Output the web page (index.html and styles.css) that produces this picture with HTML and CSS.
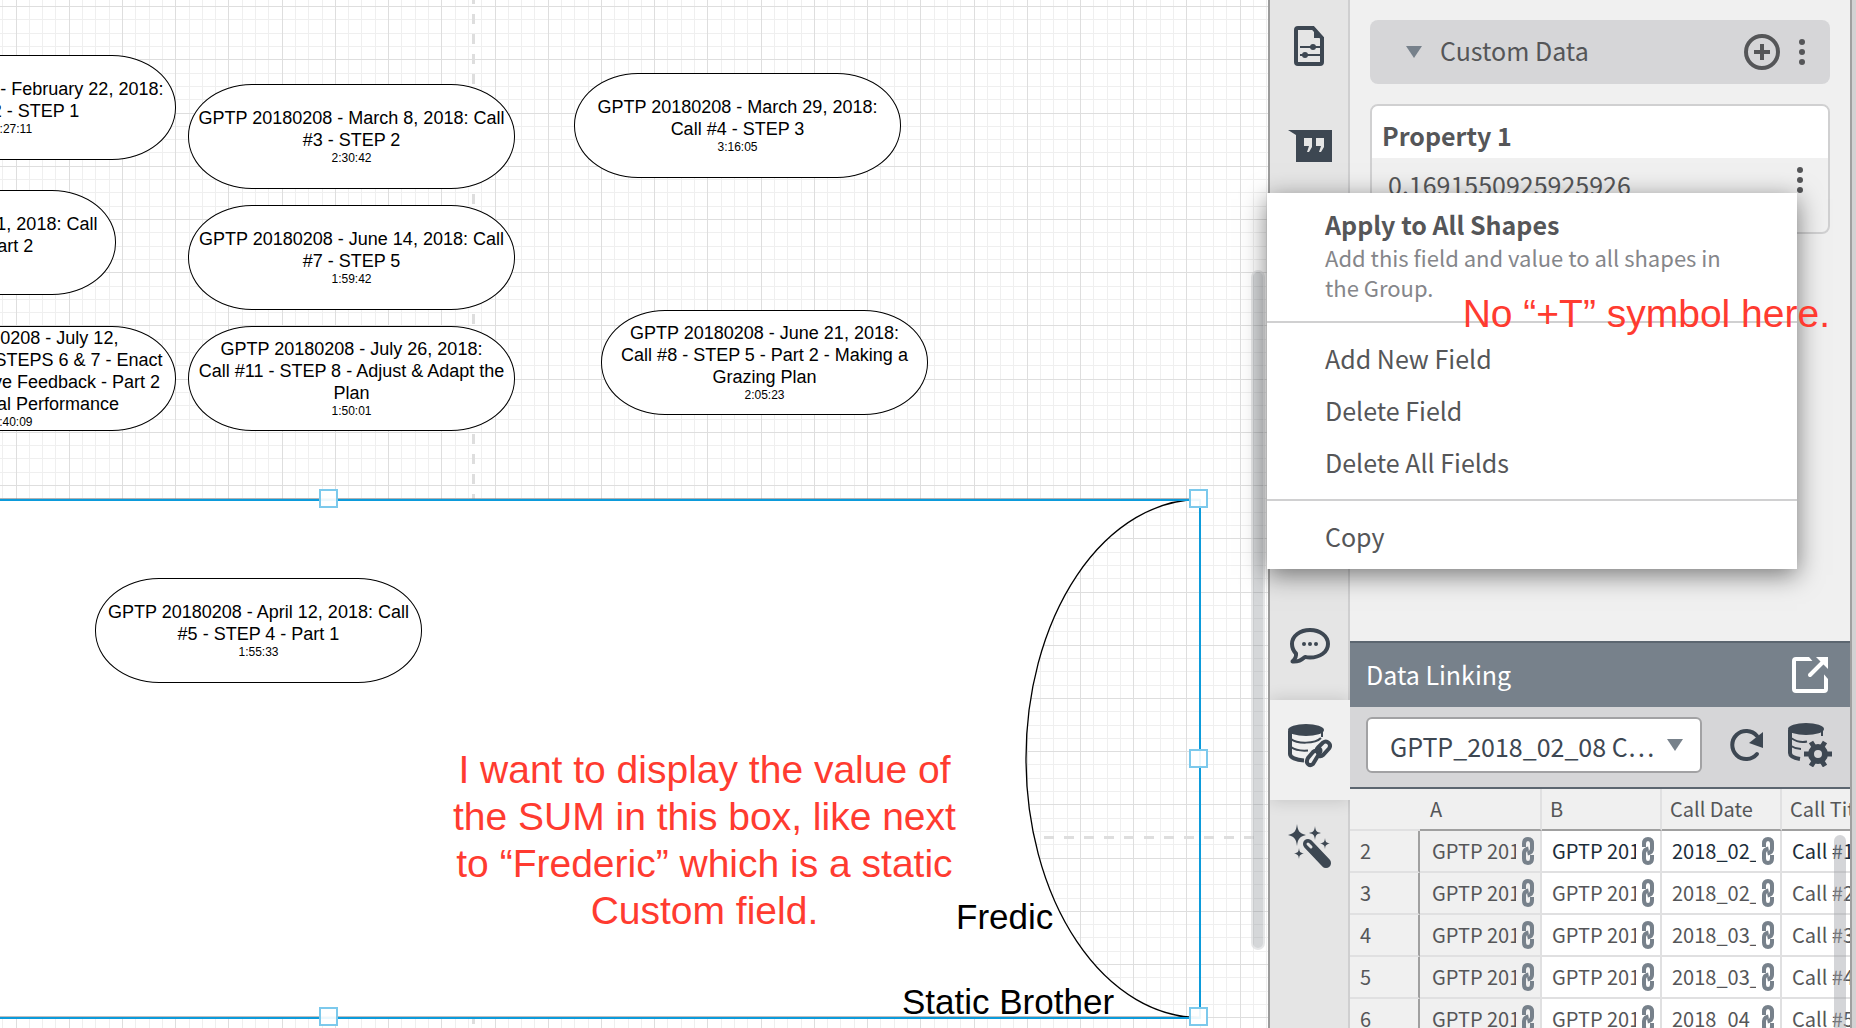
FILE: index.html
```html
<!DOCTYPE html>
<html lang="en">
<head>
<meta charset="utf-8">
<title>Diagram editor</title>
<link rel="stylesheet" href="styles.css">
</head>
<body>
<svg class="defs" aria-hidden="true">
  <symbol id="dots" viewBox="0 0 8 28"><circle cx="4" cy="4" r="3"/><circle cx="4" cy="14" r="3"/><circle cx="4" cy="24" r="3"/></symbol>
  <symbol id="link" viewBox="0 0 14 30"><path d="M3 11V7.500Q3 3 7 3T11 7.500V13Q11 16.500 6.500 17.500M11 19V22.500Q11 27 7 27T3 22.500V17Q3 13.500 7.500 12.500" fill="none" stroke="currentColor" stroke-width="4"/></symbol>
</svg>
<div class="app">
  <main class="canvas">
    <svg class="grid" aria-hidden="true">
      <g shape-rendering="crispEdges">
        <path class="minor" stroke-dasharray="1 12.305" d="M-37.670 1500H4000"/>
        <path class="minor" stroke-dasharray="1 12.305" d="M2000 -47.120V3000"/>
        <path class="major" stroke-dasharray="1 52.220" d="M-37.670 1500H4000"/>
        <path class="major" stroke-dasharray="1 52.220" d="M2000 -47.120V3000"/>
      </g>
      <path class="page-edge" d="M473.500 -6V3000M-16 837.500H1256"/>
      <path class="body-shape" d="M-10 499.500H1200A174 259 0 0 0 1200 1017.500H-10Z"/>
    </svg>

    <div class="node n1"><p>GPTP 20180208 - February 22, 2018:<br>Call #2 - STEP 1</p><small>1:27:11</small></div>
    <div class="node n2"><p>GPTP 20180208 - May 1, 2018: Call<br>#6 - STEP 4 - Part 2</p><small>2:04:10</small></div>
    <div class="node n3"><p>GPTP 20180208 - July 12,<br>2018: Call #10 - STEPS 6 &amp; 7 - Enact<br>&amp; the Constructive Feedback - Part 2<br>- Educational Performance</p><small>1:40:09</small></div>
    <div class="node n4"><p>GPTP 20180208 - March 8, 2018: Call<br>#3 - STEP 2</p><small>2:30:42</small></div>
    <div class="node n5"><p>GPTP 20180208 - June 14, 2018: Call<br>#7 - STEP 5</p><small>1:59:42</small></div>
    <div class="node n6"><p>GPTP 20180208 - July 26, 2018:<br>Call #11 - STEP 8 - Adjust &amp; Adapt the<br>Plan</p><small>1:50:01</small></div>
    <div class="node n7"><p>GPTP 20180208 - March 29, 2018:<br>Call #4 - STEP 3</p><small>3:16:05</small></div>
    <div class="node n8"><p>GPTP 20180208 - June 21, 2018:<br>Call #8 - STEP 5 - Part 2 - Making a<br>Grazing Plan</p><small>2:05:23</small></div>
    <div class="node n9"><p>GPTP 20180208 - April 12, 2018: Call<br>#5 - STEP 4 - Part 1</p><small>1:55:33</small></div>

    <p class="shape-text fredic">Fredic</p>
    <p class="shape-text brother">Static Brother</p>

    <div class="selection">
      <i class="handle tm"></i><i class="handle tr"></i><i class="handle mr"></i><i class="handle br"></i><i class="handle bm"></i>
    </div>

    <p class="note note-sum">I want to display the value of<br>the SUM in this box, like next<br>to “Frederic” which is a static<br>Custom field.</p>
    <div class="canvas-scroll"></div>
  </main>

  <aside class="sidebar">
    <nav class="rail">
      <button class="tab" aria-label="Page settings"><svg width="44" height="44" viewBox="0 0 44 44"><path d="M10 4h15l9 10v24a2 2 0 0 1-2 2H10a2 2 0 0 1-2-2V6a2 2 0 0 1 2-2Z" fill="none" stroke="currentColor" stroke-width="4"/><path d="M26 3l9 11h-9Z" fill="currentColor"/><path d="M12 23h20M12 31h20" stroke="currentColor" stroke-width="2"/><circle cx="25" cy="23" r="3" fill="currentColor"/><circle cx="17" cy="31" r="3" fill="currentColor"/></svg></button>
      <button class="tab" aria-label="Notes"><svg width="44" height="44" viewBox="0 0 44 44"><path d="M0 6h44v32H8V11Z" fill="currentColor"/><path d="M16 14h8v9l-3 5h-2l2-6h-5ZM28 14h8v9l-3 5h-2l2-6h-5Z" fill="#e5e5e5"/></svg></button>
      <div class="rail-gap"></div>
      <button class="tab" aria-label="Comments"><svg width="44" height="44" viewBox="0 0 44 44"><path d="M22 6c10 0 18 6 18 14s-8 13.500-18 13.500c-2 0-3.500-.2-5-.6C14 35.500 9 38 4.500 37.500 7 35 8.500 32 8 29.500 5.500 27 4 24 4 20 4 12 12 6 22 6Z" fill="none" stroke="currentColor" stroke-width="4" stroke-linejoin="round"/><g fill="currentColor"><circle cx="16" cy="20" r="2"/><circle cx="22" cy="20" r="2"/><circle cx="28" cy="20" r="2"/></g></svg></button>
      <button class="tab active" aria-label="Data linking"><svg width="44" height="44" viewBox="0 0 44 44"><ellipse cx="18" cy="6" rx="18" ry="6" fill="currentColor"/><path d="M2 7v23c0 3.500 6 6 14 6.500" fill="none" stroke="currentColor" stroke-width="4"/><path d="M34 7v6M3 15c6 5 24 5 30-1M3 23c4 3 11 4 17 3.500" fill="none" stroke="currentColor" stroke-width="2"/><g fill="none" stroke="currentColor" stroke-width="4"><path d="M31 28l-1 1c-2-2-2-3.500 0-5.500l5-5c4-3 9 2 6 6l-6 6.500c-1 1-2.500 1.500-4 1"/><path d="M31 24c2 2 2 4 0 6l-6 10c-4 3-8-1-5-6l5-6c1-1 2.500-1.500 4-1"/></g></svg></button>
      <button class="tab" aria-label="Magic"><svg width="44" height="44" viewBox="0 0 44 44"><g fill="currentColor"><path d="M9 0c1 7 2 9 9 11-7 2-8 4-9 11-1-7-2-9-9-11 7-2 8-4 9-11ZM27 2c.6 5 1.500 6 6 7-4.500 1-5.400 2-6 7-.6-5-1.500-6-6-7 4.500-1 5.400-2 6-7ZM37 14c.5 4 1 4.500 5 5.500-4 1-4.500 1.500-5 5.500-.5-4-1-4.500-5-5.500 4-1 4.500-1.500 5-5.500ZM11 24c.5 4 1 4.500 5 5.500-4 1-4.500 1.500-5 5.500-.5-4-1-4.500-5-5.500 4-1 4.500-1.500 5-5.500Z"/></g><path d="M20 20l18 19" stroke="currentColor" stroke-width="10" stroke-linecap="round"/><path d="M20 20l3 3" stroke="#e5e5e5" stroke-width="3" stroke-linecap="round"/></svg></button>
    </nav>

    <div class="panel">
      <section class="custom">
        <header class="custom-head">
          <i class="tri"></i><h2>Custom Data</h2>
          <button class="icon-btn add" aria-label="Add field"><svg width="36" height="36" viewBox="0 0 36 36"><circle cx="18" cy="18" r="16" fill="none" stroke="currentColor" stroke-width="4"/><path d="M18 10v16M10 18h16" stroke="currentColor" stroke-width="4"/></svg></button>
          <button class="icon-btn" aria-label="More"><svg class="dots" width="8" height="28"><use href="#dots"/></svg></button>
        </header>
        <div class="card">
          <h3>Property 1</h3>
          <div class="card-value"><span>0.1691550925925926</span><button class="icon-btn" aria-label="Field options"><svg class="dots" width="8" height="28"><use href="#dots"/></svg></button></div>
        </div>
      </section>

      <section class="linking">
        <header class="link-head"><h2>Data Linking</h2><button class="icon-btn" aria-label="Open in window"><svg width="36" height="36" viewBox="0 0 36 36"><path d="M21 2H4a2 2 0 0 0-2 2v28a2 2 0 0 0 2 2h28a2 2 0 0 0 2-2V15" fill="none" stroke="currentColor" stroke-width="4"/><path d="M17 0h19v22Z" fill="#77818b"/><path d="M24 0h12v12Z" fill="currentColor"/><path d="M18 18L31 5" stroke="currentColor" stroke-width="4" stroke-linecap="round"/></svg></button></header>
        <div class="link-tools">
          <div class="picker"><select aria-label="Data set"><option>GPTP_2018_02_08 C…</option></select><i class="tri"></i></div>
          <button class="icon-btn refresh" aria-label="Refresh"><svg width="36" height="36" viewBox="0 0 36 36"><path d="M29 27A14 14 0 1 1 29 9" fill="none" stroke="currentColor" stroke-width="4" stroke-linecap="round"/><path d="M35 5v16l-14-5Z" fill="currentColor"/></svg></button>
          <button class="icon-btn" aria-label="Data settings"><svg width="44" height="44" viewBox="0 0 44 44"><ellipse cx="18" cy="6" rx="18" ry="6" fill="currentColor"/><path d="M2 7v23c0 3 4 5 10 6" fill="none" stroke="currentColor" stroke-width="4"/><path d="M34 7v6M3 15c6 4 12 4.500 16 3.500M3 23c3 2 6 3 10 3" fill="none" stroke="currentColor" stroke-width="2"/><circle cx="30" cy="31" r="7" fill="none" stroke="currentColor" stroke-width="6"/><path d="M16 31h6M38 31h6M23 19l3.500 5.500M33.500 37.500L37 43M37 19l-3.500 5.500M26.500 37.500L23 43" stroke="currentColor" stroke-width="5"/></svg></button>
        </div>
        <div class="sheet">
          <table>
            <thead><tr><th class="num"></th><th>A</th><th>B</th><th>Call Date</th><th>Call Title</th></tr></thead>
            <tbody>
              <tr class="current"><th class="num">2</th><td><div><span>GPTP 20180208</span><svg><use href="#link"/></svg></div></td><td><div><span>GPTP 20180208</span><svg><use href="#link"/></svg></div></td><td><div><span>2018_02_08</span><svg><use href="#link"/></svg></div></td><td><div><span>Call #1</span></div></td></tr>
              <tr><th class="num">3</th><td><div><span>GPTP 20180208</span><svg><use href="#link"/></svg></div></td><td><div><span>GPTP 20180208</span><svg><use href="#link"/></svg></div></td><td><div><span>2018_02_22</span><svg><use href="#link"/></svg></div></td><td><div><span>Call #2</span></div></td></tr>
              <tr><th class="num">4</th><td><div><span>GPTP 20180208</span><svg><use href="#link"/></svg></div></td><td><div><span>GPTP 20180208</span><svg><use href="#link"/></svg></div></td><td><div><span>2018_03_08</span><svg><use href="#link"/></svg></div></td><td><div><span>Call #3</span></div></td></tr>
              <tr><th class="num">5</th><td><div><span>GPTP 20180208</span><svg><use href="#link"/></svg></div></td><td><div><span>GPTP 20180208</span><svg><use href="#link"/></svg></div></td><td><div><span>2018_03_29</span><svg><use href="#link"/></svg></div></td><td><div><span>Call #4</span></div></td></tr>
              <tr><th class="num">6</th><td><div><span>GPTP 20180208</span><svg><use href="#link"/></svg></div></td><td><div><span>GPTP 20180208</span><svg><use href="#link"/></svg></div></td><td><div><span>2018_04_12</span><svg><use href="#link"/></svg></div></td><td><div><span>Call #5</span></div></td></tr>
            </tbody>
          </table>
          <div class="sheet-scroll"></div>
        </div>
      </section>
    </div>

    <div class="menu">
      <button class="lead"><b>Apply to All Shapes</b><span>Add this field and value to all shapes in<br>the Group.</span></button>
      <div class="group"><button>Add New Field</button><button>Delete Field</button><button>Delete All Fields</button></div>
      <div class="group"><button>Copy</button></div>
    </div>
    <p class="note note-symbol">No “+T” symbol here.</p>
  </aside>
</div>
</body>
</html>
```
FILE: styles.css
```css
* { box-sizing: border-box; }
body { margin: 0; font-family: "Noto Sans CJK SC", "Noto Sans", sans-serif; color: #555658; }
h2, h3, p { margin: 0; font-weight: 400; }
button { font: inherit; color: inherit; background: none; border: 0; padding: 0; text-align: left; }
svg { display: block; }
.defs { display: none; }

.app { display: grid; grid-template-columns: minmax(0, 1fr) 588px; height: 100vh; overflow: hidden; }

/* Canvas */
.canvas { position: relative; overflow: hidden; background: #fff; font-family: "Liberation Sans", Arial, sans-serif; color: #000; }
.grid { position: absolute; inset: 0; width: 100%; height: 100%; }
.grid path { fill: none; }
.grid .minor { stroke: #efefef; stroke-width: 4000; }
.grid .major { stroke: #dedede; stroke-width: 4000; }
.grid .page-edge { stroke: #dedede; stroke-width: 3; stroke-dasharray: 10 10; }
.grid .body-shape { fill: #fff; stroke: #000; stroke-width: 1.3; }

.node { position: absolute; width: 327px; height: 105px; display: flex; flex-direction: column; justify-content: center; align-items: center; text-align: center; white-space: nowrap; background: #fff; border: 1px solid #000; border-radius: 64px / 52px; font-size: 18px; line-height: 22px; }
.node small { font-size: 12px; line-height: 15px; }
.n1 { left: -151px; top: 55px; }
.n2 { left: -211px; top: 190px; }
.n3 { left: -151px; top: 326px; }
.n4 { left: 188px; top: 84px; }
.n5 { left: 188px; top: 205px; }
.n6 { left: 188px; top: 326px; }
.n7 { left: 574px; top: 73px; }
.n8 { left: 601px; top: 310px; }
.n9 { left: 95px; top: 578px; }

.shape-text { position: absolute; font-size: 35px; line-height: 40px; white-space: nowrap; }
.fredic { left: 956px; top: 897px; }
.brother { left: 902px; top: 982px; }

.selection { position: absolute; left: -546px; top: 499px; width: 1747px; height: 520px; border: 2px solid #0c9bdb; }
.handle { position: absolute; width: 19px; height: 19px; border: 2px solid #7cc9ec; background: rgba(255, 255, 255, .92); }
.tm { left: 863px; top: -12px; }
.tr { right: -9px; top: -12px; }
.mr { right: -9px; top: 248px; }
.br { right: -9px; bottom: -9px; }
.bm { left: 863px; bottom: -9px; }

.note { position: absolute; font-family: "Liberation Sans", Arial, sans-serif; font-size: 39px; line-height: 47px; color: #ff3b30; text-align: center; white-space: nowrap; }
.note-sum { left: 453px; top: 746px; }
.note-symbol { right: 26px; top: 290px; }
.canvas-scroll { position: absolute; right: 3px; top: 270px; width: 14px; height: 680px; border-radius: 7px; background: rgba(125, 130, 138, .32); border: 2px solid rgba(255, 255, 255, .4); }

/* Sidebar */
.sidebar { position: relative; display: grid; grid-template-columns: 80px minmax(0, 1fr); border-left: 2px solid #9c9c9c; padding-right: 4px; background: #d2d2d3; }
.rail { background: #e5e5e5; border-right: 2px solid #cfcfd0; color: #3d4752; display: flex; flex-direction: column; }
.tab { height: 100px; flex: none; display: flex; align-items: center; padding: 0 0 8px 18px; }
.tab.active { background: #f0f0f0; margin-right: -2px; box-shadow: 0 0 16px rgba(0, 0, 0, .16); clip-path: inset(-20px 0); }
.rail-gap { height: 400px; flex: none; }

.panel { background: #f0f0f0; border-right: 2px solid #a0a0a0; display: flex; flex-direction: column; min-width: 0; overflow: hidden; }
.custom { flex: 1; padding: 20px; display: flex; flex-direction: column; gap: 20px; min-height: 0; }
.custom-head { height: 64px; display: flex; align-items: center; background: #d6d6d8; border-radius: 8px; padding: 0 24px 0 36px; }
.custom-head h2 { font-size: 25px; line-height: 36px; margin-left: 18px; padding-bottom: 4px; flex: 1; }
.tri { width: 0; height: 0; border: 8px solid transparent; border-top: 12px solid #77818b; border-bottom: 0; }
.dots { fill: currentColor; }
.add { margin-right: 18px; }
.card { height: 130px; border: 2px solid #d0d0d1; border-radius: 8px; overflow: hidden; }
.card h3 { background: #fff; font-size: 25px; line-height: 36px; font-weight: 700; padding: 11px 10px 5px; height: 52px; }
.card-value { display: flex; justify-content: space-between; align-items: flex-start; padding: 8px 24px 0 16px; font-size: 25px; line-height: 36px; }

.linking { height: 387px; flex: none; border-top: 2px solid #5c6670; display: flex; flex-direction: column; }
.link-head { height: 64px; flex: none; display: flex; align-items: center; justify-content: space-between; padding: 0 22px 0 16px; background: #77818b; color: #fff; }
.link-head h2 { font-size: 25px; line-height: 36px; padding-bottom: 2px; }
.link-tools { height: 82px; flex: none; display: flex; align-items: center; padding: 0 18px 4px 16px; background: #d6d6d8; border-bottom: 2px solid #5c6670; color: #3d4752; }
.picker { position: relative; flex: 1; margin-right: 26px; }
.picker select { display: block; appearance: none; width: 100%; height: 56px; border: 2px solid #a2a2a4; border-radius: 6px; background: #fff; color: #3d4752; font: inherit; font-size: 25px; padding: 2px 0 0 22px; }
.picker .tri { position: absolute; right: 19px; top: 22px; }
.refresh { margin-right: 24px; }

.sheet { position: relative; flex: 1; overflow: hidden; }
table { border-collapse: separate; border-spacing: 0; table-layout: fixed; width: 552px; font-size: 20px; line-height: 30px; }
th { font-weight: 400; text-align: left; }
thead th { width: 120px; height: 42px; padding: 0 0 0 8px; border-right: 2px solid #e0e0e1; border-bottom: 2px solid #a0a0a0; }
thead th:nth-child(2) { width: 122px; padding-left: 10px; }
thead .num { width: 70px; border-right: 0; border-bottom-color: #e0e0e1; }
tbody .num { padding: 0 0 0 10px; border-right: 2px solid #a0a0a0; border-bottom: 2px solid #e0e0e1; }
td { height: 42px; padding: 0; background: #fff; border-right: 2px solid #e0e0e1; border-bottom: 2px solid #e0e0e1; }
td div { display: flex; align-items: center; padding: 0 5px 0 10px; }
td span { flex: 1; overflow: hidden; white-space: nowrap; margin-right: 5px; }
td svg { width: 14px; height: 30px; color: #77818b; flex: none; }
tbody td:nth-child(2) { background: #f0f0f0; }
tbody td:nth-child(2) div { padding-left: 12px; }
.current td:nth-child(n+3) { color: #1b2d3a; }
.sheet-scroll { position: absolute; right: 4px; top: 46px; width: 12px; height: 600px; border-radius: 6px; background: rgba(160, 162, 168, .45); }

/* Field menu */
.menu { position: absolute; left: -3px; top: 193px; width: 530px; background: #fff; box-shadow: 0 6px 24px rgba(0, 0, 0, .5); }
.menu button { display: block; width: 100%; padding: 0 58px; font-size: 25px; line-height: 52px; }
.menu .lead { padding: 13px 58px 19px; line-height: 36px; }
.lead b { display: block; font-weight: 700; }
.lead span { display: block; font-size: 22px; line-height: 30px; color: #85868a; }
.group { border-top: 2px solid #d0d0d1; padding: 9px 0 11px; }
.group:last-child { padding-bottom: 7px; }
```
